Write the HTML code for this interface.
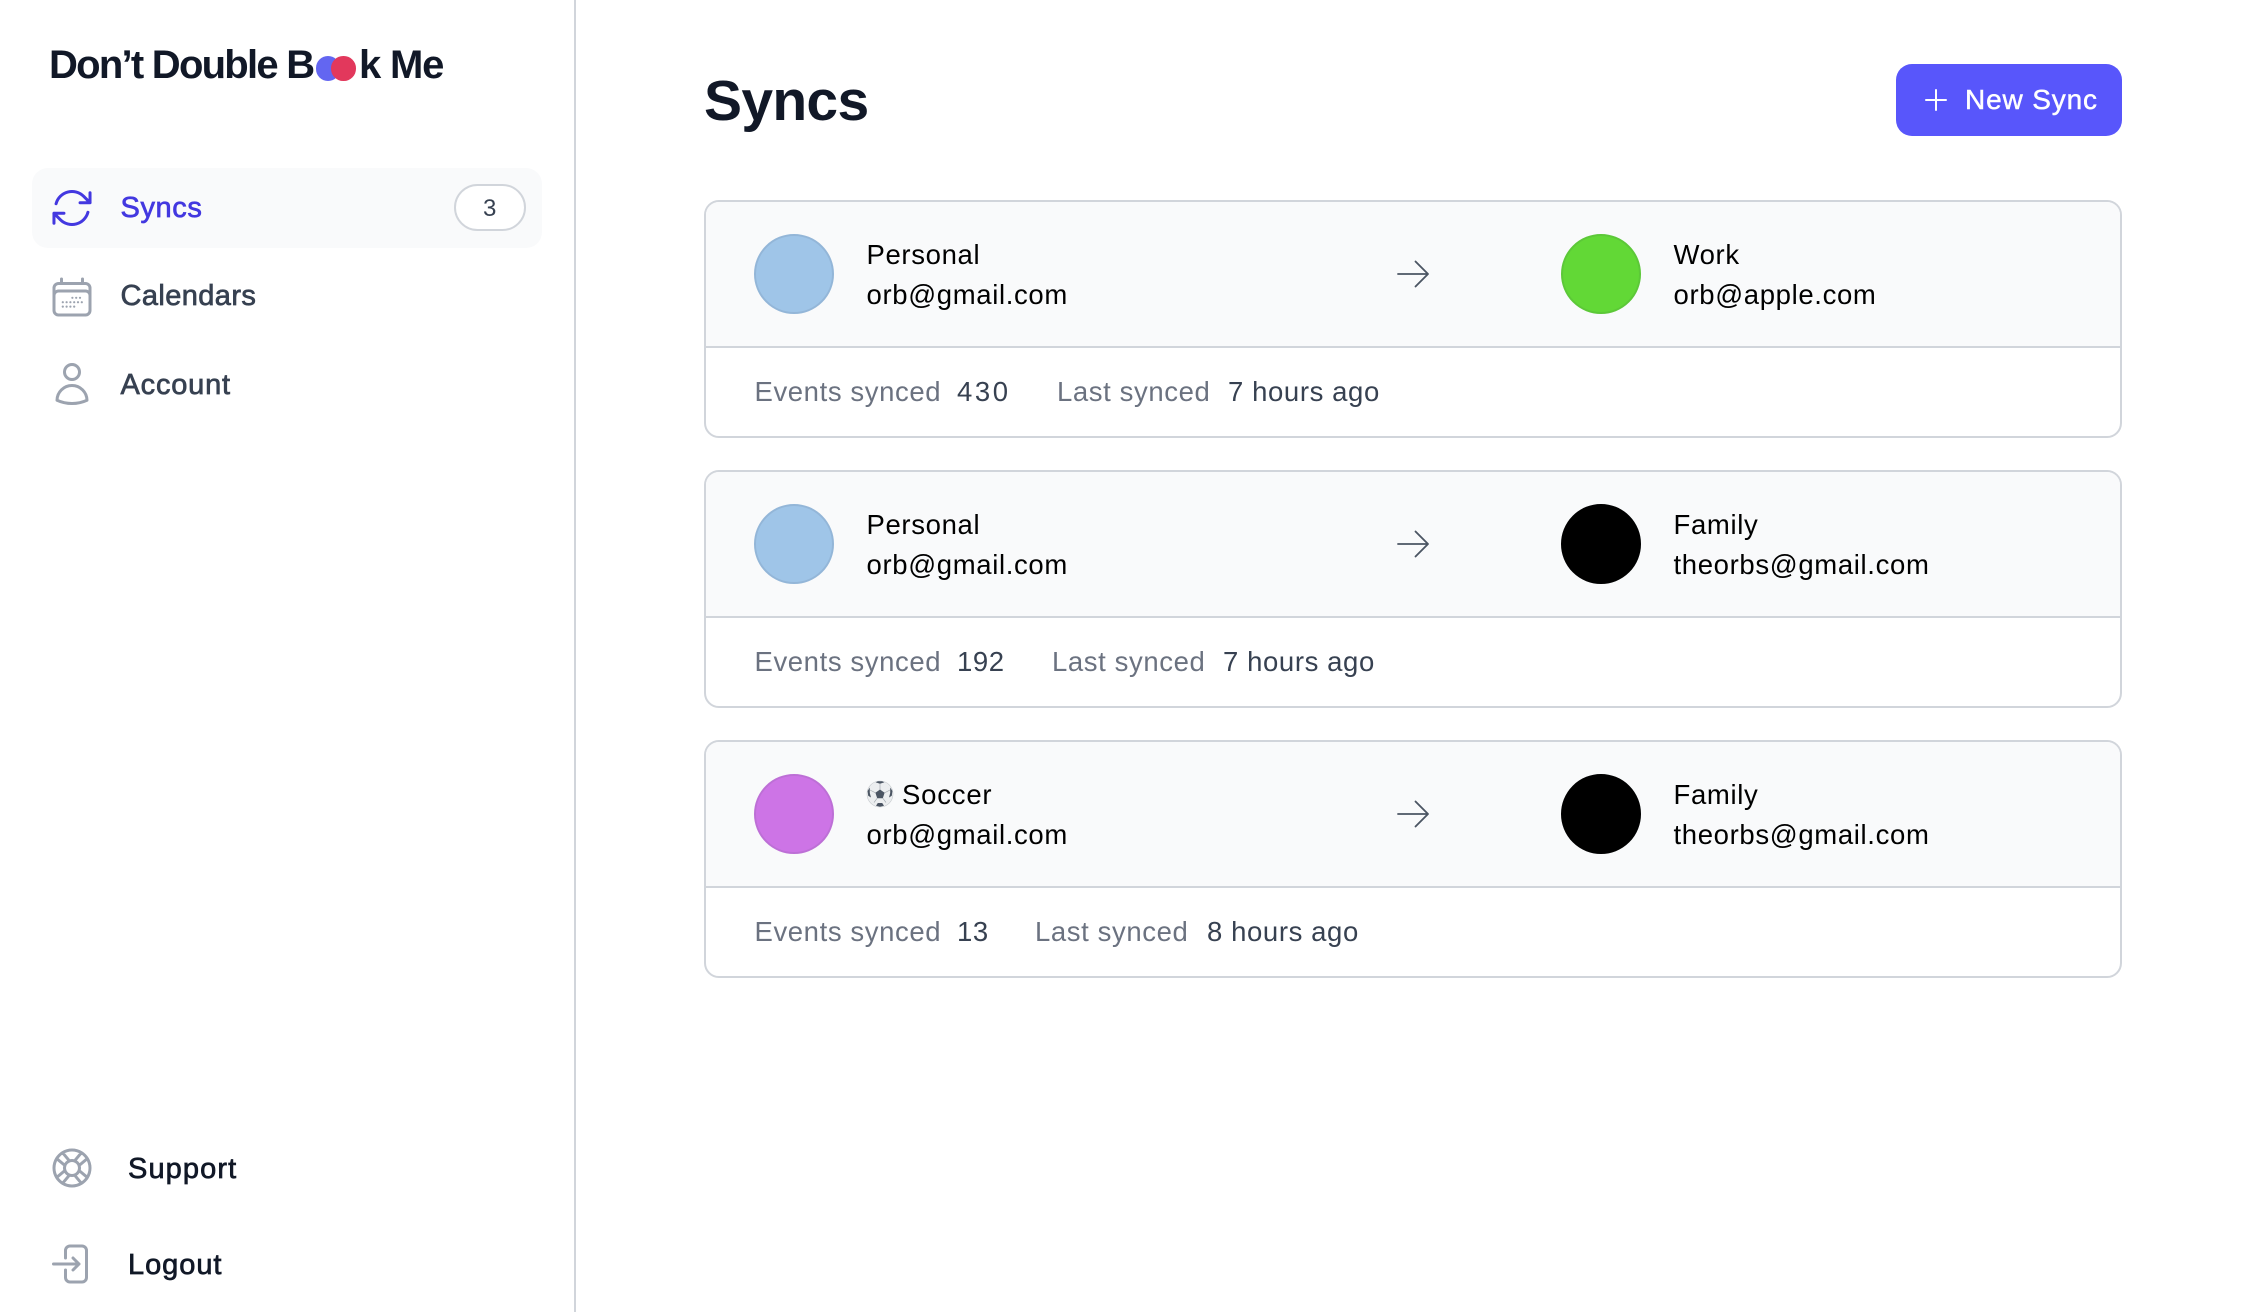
<!DOCTYPE html>
<html lang="en"><head><meta charset="utf-8"><title>Syncs</title>
<style>
*{box-sizing:border-box}
html,body{margin:0;padding:0;background:#fff}
body{width:2250px;height:1312px;position:relative;overflow:hidden;font-family:"Liberation Sans",sans-serif}
.t{position:absolute;white-space:nowrap;line-height:40px;margin:0;font-weight:400}
.c{position:absolute;left:704px;width:1418px;height:238px}
.box{position:absolute;inset:0;border:2px solid #d1d5db;border-radius:15px;background:#fff;overflow:hidden}
.hd{position:absolute;left:0;top:0;right:0;height:146px;background:#f9fafb;border-bottom:2px solid #d1d5db}
.av{position:absolute;top:34px;width:80px;height:80px;border-radius:50%;border:2px solid}
.n{font-size:27.5px;letter-spacing:.65px;color:#000}
.f{font-size:27.5px;letter-spacing:.6px;top:172px}
.g{color:#6b7280}.v{color:#374151}
.nav{font-size:29px;letter-spacing:.6px;-webkit-text-stroke:.7px currentColor}
svg{position:absolute;fill:none}
</style></head><body>

<div style="position:absolute;left:574px;top:0;width:2px;height:1312px;background:#d1d5db"></div>

<div class="t" style="left:49px;top:45px;font-size:40px;font-weight:700;letter-spacing:-1.75px;color:#111827">Don’t Double B</div>
<div style="position:absolute;left:315.5px;top:56px;width:24.5px;height:24.5px;border-radius:50%;background:#6366f1"></div>
<div style="position:absolute;left:331px;top:56px;width:24.5px;height:24.5px;border-radius:50%;background:#e2385c"></div>
<div class="t" style="left:359px;top:45px;font-size:40px;font-weight:700;letter-spacing:-1.2px;color:#111827">k Me</div>

<div style="position:absolute;left:32px;top:168px;width:510px;height:80px;border-radius:16px;background:#f9fafb"></div>
<svg style="left:48px;top:184px" width="48" height="48" viewBox="0 0 24 24" stroke="#4338e0" stroke-width="1.5" stroke-linecap="round" stroke-linejoin="round"><path d="M16.023 9.348h4.992v-.001M2.985 19.644v-4.992m0 0h4.992m-4.993 0l3.181 3.183a8.25 8.25 0 0013.803-3.7M4.031 9.865a8.25 8.25 0 0113.803-3.7l3.181 3.182m0-4.991v4.99"/></svg>
<div class="t nav" style="left:120.5px;top:188px;color:#4338e0">Syncs</div>
<div style="position:absolute;left:454px;top:184px;width:72px;height:47px;border-radius:24px;border:2px solid #d1d5db;background:#fff"></div>
<div class="t" style="left:483px;top:189px;font-size:24px;color:#374151">3</div>

<svg style="left:48px;top:272.5px" width="48" height="48" viewBox="0 0 24 24" stroke="#9ca3af" stroke-width="1.5" stroke-linecap="round" stroke-linejoin="round"><path d="M6.75 3v2.25M17.25 3v2.25M3 18.75V7.5a2.25 2.25 0 012.25-2.25h13.5A2.25 2.25 0 0121 7.5v11.25m-18 0A2.25 2.25 0 005.25 21h13.5A2.25 2.25 0 0021 18.75m-18 0v-7.5A2.25 2.25 0 015.25 9h13.5A2.25 2.25 0 0121 11.25v7.5"/><g fill="#9ca3af" stroke="none"><circle cx="12.2" cy="12.4" r=".55"/><circle cx="14.1" cy="12.4" r=".55"/><circle cx="16" cy="12.4" r=".55"/><circle cx="7.4" cy="14.6" r=".55"/><circle cx="9.3" cy="14.6" r=".55"/><circle cx="11.2" cy="14.6" r=".55"/><circle cx="13.1" cy="14.6" r=".55"/><circle cx="15" cy="14.6" r=".55"/><circle cx="16.9" cy="14.6" r=".55"/><circle cx="7.4" cy="16.8" r=".55"/><circle cx="9.3" cy="16.8" r=".55"/><circle cx="11.2" cy="16.8" r=".55"/><circle cx="13.1" cy="16.8" r=".55"/></g></svg>
<div class="t nav" style="left:120.5px;top:276px;color:#374151;letter-spacing:.4px">Calendars</div>

<svg style="left:48px;top:360px" width="48" height="48" viewBox="0 0 24 24" stroke="#9ca3af" stroke-width="1.5" stroke-linecap="round" stroke-linejoin="round"><path d="M15.75 6a3.75 3.75 0 11-7.5 0 3.75 3.75 0 017.5 0zM4.501 20.118a7.5 7.5 0 0114.998 0A17.933 17.933 0 0112 21.75c-2.676 0-5.216-.584-7.499-1.632z"/></svg>
<div class="t nav" style="left:120.5px;top:364.5px;color:#374151;letter-spacing:.8px">Account</div>

<svg style="left:48px;top:1143.5px" width="48" height="48" viewBox="0 0 24 24" stroke="#9ca3af" stroke-width="1.5" stroke-linecap="round" stroke-linejoin="round"><path d="M16.712 4.33a9.027 9.027 0 011.652 1.306c.51.51.944 1.064 1.306 1.652M16.712 4.33l-3.448 4.138m3.448-4.138a9.014 9.014 0 00-9.424 0M19.67 7.288l-4.138 3.448m4.138-3.448a9.014 9.014 0 010 9.424m-4.138-5.976a3.736 3.736 0 00-.88-1.388 3.737 3.737 0 00-1.388-.88m2.268 2.268a3.765 3.765 0 010 2.528m-2.268-4.796a3.765 3.765 0 00-2.528 0m4.796 4.796c-.181.506-.475.982-.88 1.388a3.736 3.736 0 01-1.388.88m2.268-2.268l4.138 3.448m0 0a9.027 9.027 0 01-1.306 1.652c-.51.51-1.064.944-1.652 1.306m0 0l-3.448-4.138m3.448 4.138a9.014 9.014 0 01-9.424 0m5.976-4.138a3.765 3.765 0 01-2.528 0m0 0a3.736 3.736 0 01-1.388-.88 3.737 3.737 0 01-.88-1.388m2.268 2.268L7.288 19.67m0 0a9.024 9.024 0 01-1.652-1.306 9.027 9.027 0 01-1.306-1.652m0 0l4.138-3.448M4.33 16.712a9.014 9.014 0 010-9.424m4.138 5.976a3.765 3.765 0 010-2.528m0 0c.181-.506.475-.982.88-1.388a3.736 3.736 0 011.388-.88m-2.268 2.268L4.33 7.288m6.406 1.18L7.288 4.33m0 0a9.024 9.024 0 00-1.652 1.306A9.025 9.025 0 004.33 7.288"/></svg>
<div class="t nav" style="left:128px;top:1148.5px;color:#111827;letter-spacing:1.1px">Support</div>

<svg style="left:48.5px;top:1239.5px" width="48" height="48" viewBox="0 0 24 24" stroke="#9ca3af" stroke-width="1.5" stroke-linecap="round" stroke-linejoin="round"><path d="M8.25 9V5.25A2.25 2.25 0 0110.5 3h6a2.25 2.25 0 012.25 2.25v13.5A2.25 2.25 0 0116.5 21h-6a2.25 2.25 0 01-2.25-2.25V15M12 9l3 3m0 0l-3 3m3-3H2.25"/></svg>
<div class="t nav" style="left:128px;top:1244.5px;color:#111827;letter-spacing:.95px">Logout</div>

<h1 class="t" style="left:704px;top:81px;font-size:57px;font-weight:700;letter-spacing:-.7px;color:#111827">Syncs</h1>

<div style="position:absolute;left:1896px;top:64px;width:226px;height:72px;border-radius:16px;background:#5856fb"></div>
<svg style="left:1922px;top:86px" width="28" height="28" viewBox="0 0 28 28" stroke="#fff" stroke-width="2" stroke-linecap="round"><path d="M14 4v20M4 14h20"/></svg>
<div class="t nav" style="left:1965px;top:80px;font-size:28px;letter-spacing:.85px;color:#fff;-webkit-text-stroke:.45px #fff">New Sync</div>

<!-- Card 1 -->
<div class="c" style="top:200px">
<div class="box"><div class="hd"></div></div>
<div class="av" style="left:50px;background:#9fc5e8;border-color:#93b6d8"></div>
<div class="t n" style="left:162.5px;top:34.5px">Personal</div>
<div class="t n" style="left:162.5px;top:74.5px">orb@gmail.com</div>
<svg style="left:688.5px;top:54px" width="40" height="40" viewBox="0 0 24 24" stroke="#4b5563" stroke-width="1.1" stroke-linecap="round" stroke-linejoin="round"><path d="M13.5 4.5L21 12m0 0l-7.5 7.5M21 12H3"/></svg>
<div class="av" style="left:857px;background:#62d836;border-color:#5cc838"></div>
<div class="t n" style="left:969.5px;top:34.5px">Work</div>
<div class="t n" style="left:969.5px;top:74.5px">orb@apple.com</div>
<div class="t f g" style="left:50.5px">Events synced</div>
<div class="t f v" style="left:253px;letter-spacing:2.6px">430</div>
<div class="t f g" style="left:353px">Last synced</div>
<div class="t f v" style="left:524px">7 hours ago</div>
</div>

<!-- Card 2 -->
<div class="c" style="top:470px">
<div class="box"><div class="hd"></div></div>
<div class="av" style="left:50px;background:#9fc5e8;border-color:#93b6d8"></div>
<div class="t n" style="left:162.5px;top:34.5px">Personal</div>
<div class="t n" style="left:162.5px;top:74.5px">orb@gmail.com</div>
<svg style="left:688.5px;top:54px" width="40" height="40" viewBox="0 0 24 24" stroke="#4b5563" stroke-width="1.1" stroke-linecap="round" stroke-linejoin="round"><path d="M13.5 4.5L21 12m0 0l-7.5 7.5M21 12H3"/></svg>
<div class="av" style="left:857px;background:#000;border-color:#000"></div>
<div class="t n" style="left:969.5px;top:34.5px">Family</div>
<div class="t n" style="left:969.5px;top:74.5px">theorbs@gmail.com</div>
<div class="t f g" style="left:50.5px">Events synced</div>
<div class="t f v" style="left:253px">192</div>
<div class="t f g" style="left:348px">Last synced</div>
<div class="t f v" style="left:519px">7 hours ago</div>
</div>

<!-- Card 3 -->
<div class="c" style="top:740px">
<div class="box"><div class="hd"></div></div>
<div class="av" style="left:50px;background:#cd74e6;border-color:#bd6fd6"></div>
<svg style="left:162px;top:40px" width="28" height="28" viewBox="0 0 28 28" aria-label="⚽"><circle cx="14" cy="14" r="13" fill="#eceef0" stroke="#c4c8cc" stroke-width=".6"/><path d="M14 9.5l4.6 3.3-1.8 5.4h-5.6l-1.8-5.4z" fill="#4b5563"/><path d="M9.5 2.2L14 3.8 18.500 2.200 16 1.200h-4zM1.600 11L3.800 7.500 3.800 13 5 17.500 2.200 15.800zM26.400 11L24.200 7.500 24.200 13 23 17.500 25.800 15.800zM10 25.800l1.800-2.800h4.400l1.800 2.800-4 1z" fill="#4b5563"/><path d="M14 3.800V9.500M9.400 12.800L4 10M18.600 12.800L24 10M11.200 18.200L8 22.500M16.800 18.200L20 22.500" stroke="#a6acb2" stroke-width=".7" fill="none"/></svg>
<div class="t n" style="left:198px;top:34.5px;letter-spacing:.8px">Soccer</div>
<div class="t n" style="left:162.5px;top:74.5px">orb@gmail.com</div>
<svg style="left:688.5px;top:54px" width="40" height="40" viewBox="0 0 24 24" stroke="#4b5563" stroke-width="1.1" stroke-linecap="round" stroke-linejoin="round"><path d="M13.5 4.5L21 12m0 0l-7.5 7.5M21 12H3"/></svg>
<div class="av" style="left:857px;background:#000;border-color:#000"></div>
<div class="t n" style="left:969.5px;top:34.5px">Family</div>
<div class="t n" style="left:969.5px;top:74.5px">theorbs@gmail.com</div>
<div class="t f g" style="left:50.5px">Events synced</div>
<div class="t f v" style="left:253px">13</div>
<div class="t f g" style="left:331px">Last synced</div>
<div class="t f v" style="left:503px">8 hours ago</div>
</div>

</body></html>
